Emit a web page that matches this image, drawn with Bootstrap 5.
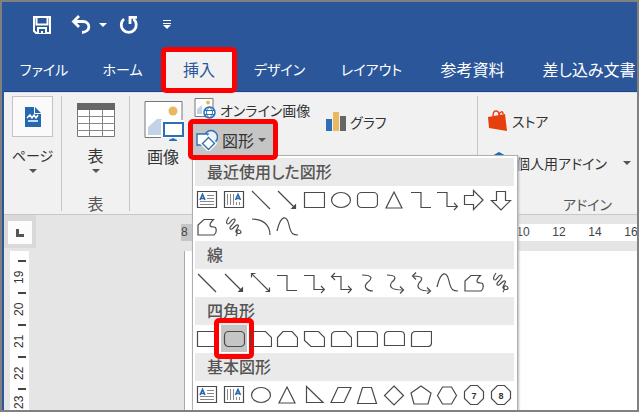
<!DOCTYPE html>
<html lang="ja">
<head>
<meta charset="utf-8">
<meta name="viewport" content="width=device-width, initial-scale=1">
<title>挿入タブ - 図形</title>
<link href="https://cdn.jsdelivr.net/npm/bootstrap@5.3.0/dist/css/bootstrap.min.css" rel="stylesheet">
<style>
body{font-family:"Noto Sans CJK JP",sans-serif;font-size:16px;line-height:20px;font-feature-settings:"palt";color:#333;background:#808080}
button{font:inherit;font-feature-settings:inherit;color:inherit;background:none;border:0;padding:0}
svg{display:block;flex:none}
.app{height:100vh;border:2px solid #808080;background:#e5e5e5}
.frame{border-left:2px solid #2b579a}
.blue{background:#2b579a;color:#fff}
.quick{height:45px;padding-left:29px}
.tabs{display:grid;grid-template-columns:80px 77px 76px 85px 99px 103px 130px;height:45px;border-bottom:1px solid #1d4489}
.tabs button{height:44px;font-size:14px;white-space:nowrap}
.tabs .kj{font-size:16px}
.tabs .picked{height:46px;border:5px solid #f00;border-radius:5px;background:#f1f1f1;color:#2b579a;position:relative;z-index:2;font-size:16px;padding-bottom:3px}
.ribbon{height:124px;background:#f1f1f1;border-bottom:1px solid #c8c8c8;border-top:1px solid #dde3ee}
.grp{margin-top:3px;height:115px;border-right:1px solid #c6c6c6;flex:none}
.caret{width:0;height:0;border:4px solid transparent;border-top-color:#555;border-bottom:0;flex:none}
.g-page{width:58px}
.g-table{width:68px;padding-top:7px}
.g-ill{width:348px}
.thumb{width:41px;height:41px;border:1px solid #c3c3c3;background:#fafafa}
.g-big{padding:5px 0 0 12px;width:56px}
.ka{font-size:14px}
.grplabel{color:#555}
.illcol{width:124px;padding-top:1px}
.online{height:22px}
.shapewrap{margin-left:2px}
.shapebtn{width:90px;height:41px;border:5px solid #f00;border-radius:5px;position:relative;z-index:5}
.shapebtn .inner{background:#c5c5c5;border:1px solid #a3cdd3;height:31px;padding-left:2px;gap:4px}
.gallery{position:absolute;left:4px;top:36px;width:326px;height:290px;background:#fff;border:1px solid #b0b0b0;box-shadow:1px 1px 2px #bbb;padding:2px 3px 0 1px;z-index:4}
.gallery h2{margin:0 0 0 1px;padding:0 0 0 12px;height:28px;line-height:26px;font-size:16px;font-weight:500;color:#555;background:#eaeaea}
.cells{display:grid;grid-template-columns:repeat(12,1fr);grid-auto-rows:27px;margin-bottom:1px}
.cells button{display:flex;align-items:center;justify-content:center;position:relative}
.cells svg{width:22px;height:22px;fill:none;stroke:#4a4a4a;stroke-width:1.2}
.cells .on{background:#c5c5c5}
.cells .on::after{content:"";position:absolute;inset:-7px;border:5px solid #f00;border-radius:5px}
.addins{padding-left:10px;padding-top:17px}
.mine{margin-top:20px}
.foot{margin-left:75px;margin-top:20px}
.ruler{height:37px;font:12px/17px "Liberation Sans",sans-serif;color:#444}
.corner{width:32px;height:33px;background:#d9d9d9;padding:6px 4px 4px 4px}
.corner div{background:#fcfcfc;height:23px;width:24px}
.hr{margin-top:9px;height:17px}
.hr .dark{background:#c6c6c6;width:12px;margin-left:145px}
.hr .nums{background:#fff;display:grid;grid-template-columns:repeat(4,36px);margin-left:312px;text-align:center;flex:1}
.vr{width:19px;min-height:0;margin-left:6px;background:#fff;font:12px/12px "Liberation Sans",sans-serif;overflow:hidden;padding-top:9px;opacity:1}
.vr i{display:block;width:8px;height:2px;background:#444;margin-left:8px}
.vr span{display:flex;align-items:center;justify-content:center;height:30px;writing-mode:vertical-rl;transform:rotate(180deg);width:19px;line-height:19px}
.vr span:last-child{height:24px}
.paper{background:#fff;border-left:1px solid #aaa;margin-left:155px}
</style>
<script src="https://cdn.jsdelivr.net/npm/bootstrap@5.3.0/dist/js/bootstrap.bundle.min.js"></script>
</head>
<body class="overflow-hidden m-0">
<svg width="0" height="0" class="position-absolute" aria-hidden="true"><defs>
<g id="hA"><path d="M1.500 2.500h19v16h-19z"/><path d="M11 6.500h7M11 9.500h7M4 12.500h14M4 15.500h14" stroke-width="1" stroke="#888"/><path d="M4 11L6.500 5.500L9 11M5 9.500h3" stroke="#2467b0" stroke-width="1.600"/></g>
<g id="vA"><path d="M1.500 2.500h19v16h-19z"/><path d="M4.500 5v11M7.500 5v11M10.500 5v11M13.500 13v3M16.500 13v3" stroke-width="1" stroke="#888"/><path d="M12.500 11L15 5.500L17.500 11M13.500 9.500h3" stroke="#2467b0" stroke-width="1.600"/></g>
<path id="ln" d="M2 2l18 18"/>
<g id="la"><path d="M2 2l17 17"/><path d="M19.500 16v3.500H16z" fill="#444"/></g>
<g id="l2"><path d="M2 2l17 17"/><path d="M19.500 15.500v4h-4M1.500 5.500v-4h4"/></g>
<path id="rc" d="M1.500 3.500h20v15h-20z"/>
<ellipse id="el" cx="11" cy="11" rx="9.500" ry="7.500"/>
<rect id="rr" x="1.500" y="3.500" width="20" height="15" rx="4"/>
<path id="tr" d="M11 3l8 16h-16z"/>
<path id="el1" d="M1 3.500h10v15h10"/>
<g id="el2"><path d="M1 3.500h10v14h10"/><path d="M18 14l3.500 3.500L18 21"/></g>
<g id="el3"><path d="M2 4.500h9v13h10"/><path d="M18 14l3.500 3.500L18 21M5 1L1.500 4.500L5 8"/></g>
<path id="ar" d="M1.500 6.500h9v-5l9.500 9.500l-9.500 9.500v-5h-9z"/>
<path id="ad" d="M6.500 2.500h9v9h5L11 21L1.500 11.500h5z"/>
<path id="ff" d="M2 19V9L8 3.500h9.500C16 5 14 7 14 9c0 2 2 2 4 2c3 0 3 6 0 8z"/>
<path id="sc" d="M6 1C3 5 3 8 5 8s3-5 6-5s-1 5-3 7s-1 4 1 3s4-5 6-4s-3 5-2 7s5 2 5 0s-4-3-4-1s1 3-1 5"/>
<path id="ac" d="M2 3c11 0 18 6 18 16"/>
<path id="cu" d="M1 15C5-2 11-1 13 9S18 19 22 19"/>
<path id="s1" d="M6 3c12 0 10 4 5 8c-4 4 0 8 6 8"/>
<g id="s2"><path d="M4 3c10 0 9 4 5 7c-4 5 0 8 11 8"/><path d="M17 14.500l3.500 3.500L17 21.500"/></g>
<g id="s3"><path d="M3 4c12 0 9 4 6 7c-3 5 1 8 11 8"/><path d="M17 15.500l3.500 3.500L17 22M6 .5L2.500 4L6 7.500"/></g>
<path id="c1" d="M1.500 3.500h14l6 6v9h-20z"/>
<path id="c2" d="M7 3.500h9l5.500 6v9h-20v-9z"/>
<path id="c3" d="M1.500 3.500h14l6 6v9H8l-6.500-6z"/>
<path id="c4" d="M6 3.500h10l5.500 6v9h-20v-11q0-4 4.500-4z"/>
<path id="c5" d="M1.500 3.500h16q4 0 4 4v11h-20z"/>
<path id="c6" d="M5.500 3.500h12q4 0 4 4v10h-20v-10q0-4 4-4z"/>
<path id="c7" d="M5.500 3.500h16v11q0 4-4 4h-16v-11q0-4 4-4z"/>
<path id="rt" d="M3.500 2.500L20 18.500H3.500z"/>
<path id="pl" d="M8 3.500h13l-7 15h-13z"/>
<path id="tz" d="M6.500 3.500h9l5 16h-19z"/>
<path id="di" d="M11 2l9.500 9.500L11 21L1.500 11.500z"/>
<path id="pe" d="M11 2l10 7l-3 11H4L1 9z"/>
<path id="hx" d="M6.500 3h9l5 8.500l-5 8.500h-9l-5-8.500z"/>
<path id="oc" d="M7.500 1.500h7l6 6v7l-6 6h-7l-6-6v-7z"/>
</defs></svg>
<div class="app overflow-hidden"><div class="frame h-100 d-flex flex-column">
<header class="blue">
 <div class="quick d-flex align-items-center">
  <button aria-label="保存"><svg width="18" height="18" viewBox="0 0 18 18"><path fill="none" stroke="#fff" stroke-width="2" d="M1 1h16v16H3l-2-2zM3.500 1v7.500h11V1"/><path fill="#fff" d="M4 11h10v7H4z"/><path fill="#2b579a" d="M6 13h6v4h-2v-2H8v2H6z"/></svg></button>
  <button class="d-flex align-items-center gap-2 ms-3 ps-1" aria-label="元に戻す"><svg width="20" height="20" viewBox="0 0 20 20"><path fill="none" stroke="#fff" stroke-width="2.800" d="M8 1L2.500 6.500L8 12M3 6.500h9c8 0 8 10.500-1 11"/></svg><svg width="8" height="4"><path fill="#fff" d="M0 0h8L4 4z"/></svg></button>
  <button class="ms-2 ps-1" aria-label="やり直し"><svg width="20" height="20" viewBox="0 0 20 20"><path fill="none" stroke="#fff" stroke-width="2.800" d="M5 4a7.500 7.500 0 1 0 9.500 0M11 9V2.400h7"/></svg></button>
  <button class="ms-4" aria-label="カスタマイズ"><svg width="8" height="9" viewBox="0 0 8 9"><path fill="#fff" d="M0 0h8v1H0zM0 3h8v1H0zM0 5h8L4 9z"/></svg></button>
 </div>
 <nav class="tabs"><button>ファイル</button><button>ホーム</button><button class="picked">挿入</button><button>デザイン</button><button>レイアウト</button><button class="kj">参考資料</button><button class="kj">差し込み文書</button></nav>
</header>
<section class="ribbon d-flex">
 <div class="grp g-page d-flex flex-column align-items-center"><div class="thumb d-flex align-items-center justify-content-center"><svg width="16" height="20" viewBox="0 0 16 20"><path fill="#2568ad" d="M0 0h9v7h7v13H0zM10 0l6 6h-6z"/><path fill="none" stroke="#fff" stroke-width="1.500" d="M2 11l3-3 2 3 2-3 2 3 2-3M3 14h10"/></svg></div><button class="mt-2 ka">ページ</button><span class="caret mt-1"></span></div>
 <div class="grp g-table d-flex flex-column align-items-center"><svg width="38" height="34" viewBox="0 0 38 34"><path fill="#fff" stroke="#777" d="M.5.5h37v33H.5z"/><path fill="#666" d="M0 0h38v7H0z"/><path fill="none" stroke="#888" d="M12.500 7v27M25.500 7v27M0 13.500h38M0 20.500h38M0 27.500h38"/></svg><button class="mt-2">表</button><span class="caret mt-1"></span><span class="grplabel mt-3 pt-1">表</span></div>
 <div class="grp g-ill d-flex">
  <div class="g-big"><button class="d-flex flex-column align-items-center"><svg width="42" height="41" viewBox="0 0 42 41"><path fill="#fff" stroke="#777" d="M3 .5h37v36H3z"/><circle cx="31" cy="10" r="4.500" fill="#e9b863"/><path fill="#c2d3e8" d="M6 34v-8l9-8h5v16z"/><path fill="#fff" stroke="#fff" stroke-width="4" d="M21 21h20v14H21z"/><path fill="#fff" stroke="#2c6fb5" stroke-width="2" d="M22 22h19v13H22z"/><path fill="#2c6fb5" d="M31 37l4 2v1h-8v-1z"/></svg><span class="pt-1">画像</span></button></div>
  <div class="illcol">
   <button class="d-flex align-items-center gap-1 ps-2 text-nowrap online"><svg width="22" height="22" viewBox="0 0 22 22"><path fill="#fff" stroke="#777" d="M1 1.500h18v18H1z"/><circle cx="14" cy="5.500" r="2" fill="#e9b863"/><path fill="#c2d3e8" d="M3 17v-5l5-4v9z"/><circle cx="15.500" cy="15.500" r="5.500" fill="#fff" stroke="#2c6fb5" stroke-width="1.500"/><path fill="none" stroke="#2c6fb5" d="M10 13.500h11M10 17.500h11M15.500 10c-4 3-4 8 0 11c4-3 4-8 0-11"/></svg><span class="ka pt-1">オンライン画像</span></button>
   <div class="position-relative shapewrap">
    <button class="shapebtn d-block" aria-expanded="true"><span class="inner d-flex align-items-center"><svg width="22" height="22" viewBox="0 0 22 22"><g fill="#fff" stroke="#2c6fb5" stroke-width="1.400"><circle cx="15" cy="8" r="6.500" fill="#e9eff7"/><path d="M1 5h11v11H1z"/><path stroke="#fff" stroke-width="4" d="M12.500 8.500l6 6-6 6-6-6z"/><path d="M12.500 8.500l6 6-6 6-6-6z"/></g></svg><span>図形</span><span class="caret"></span></span></button>
    <div class="gallery" id="gallery"></div>
   </div>
  </div>
  <div class="ps-3 pt-3"><button class="d-flex align-items-center gap-1 text-nowrap"><svg width="20" height="20" viewBox="0 0 20 20"><path fill="#2c6fb5" d="M0 7h6v12H0z"/><path fill="#e9b863" d="M7 0h6v19H7z"/><path fill="#666" d="M14 4h6v15h-6z"/></svg><span class="ka">グラフ</span></button><svg class="mt-4" width="20" height="2"><path d="M3 .5h16" stroke="#666" stroke-dasharray="1 2"/></svg></div>
 </div>
 <div class="addins flex-grow-1 overflow-hidden d-flex flex-column align-items-start text-nowrap">
  <button class="d-flex align-items-center gap-1"><svg width="20" height="22" viewBox="0 0 20 22"><path fill="none" stroke="#e8421a" stroke-width="1.500" d="M5 6c0-7 6-6 6-1c1-4 4-4 4-1"/><path fill="#e63e0c" d="M0 7l17-3 2 17-18-3z"/></svg><span class="ka">ストア</span></button>
  <button class="mine d-flex align-items-center gap-2"><svg width="20" height="22" viewBox="0 0 20 22"><path fill="#1468bd" d="M11 0l9 5v11l-9 5-9-5V5z"/></svg><span class="ka">個人用アドイン</span><span class="caret ms-2"></span></button>
  <span class="grplabel ka foot">アドイン</span>
 </div>
</section>
<div class="ruler d-flex"><div class="corner"><div class="d-flex justify-content-center align-items-center"><svg width="8" height="8"><path d="M1.500 0v6.500H8" fill="none" stroke="#555" stroke-width="3"/></svg></div></div><div class="hr d-flex flex-grow-1"><div class="dark">8</div><div class="nums"><span>10</span><span>12</span><span>14</span><span>16</span></div></div></div>
<main class="flex-grow-1 d-flex overflow-hidden"><div class="vr"><i></i><span>19</span><i></i><span>20</span><i></i><span>21</span><i></i><span>22</span><i></i><span>23</span></div><div class="paper flex-grow-1"></div></main>
</div></div>
<script>
const sections = [
 ['最近使用した図形', 'hA vA ln la rc el rr tr el1 el2 ar ad ff sc ac cu'],
 ['線', 'ln la l2 el1 el2 el3 s1 s2 s3 cu ff sc'],
 ['四角形', 'rc rr* c1 c2 c3 c4 c5 c6 c7'],
 ['基本図形', 'hA vA el tr rt pl tz di pe hx oc:7 oc:8']
];
document.getElementById('gallery').innerHTML = sections.map(([title, ids]) =>
 `<h2>${title}</h2><div class="cells">` + ids.split(' ').map(k => {
  const on = k.endsWith('*'), [id, n] = k.replace('*', '').split(':');
  return `<button class="${on ? 'on' : ''}" aria-label="${title}"><svg viewBox="0 0 22 22"><use href="#${id}"/>${n ? `<text x="11" y="14.500" text-anchor="middle" font-size="9" font-weight="700" font-family="Liberation Sans" fill="#333" stroke="none">${n}</text>` : ''}</svg></button>`;
 }).join('') + '</div>').join('');
</script>
</body>
</html>
